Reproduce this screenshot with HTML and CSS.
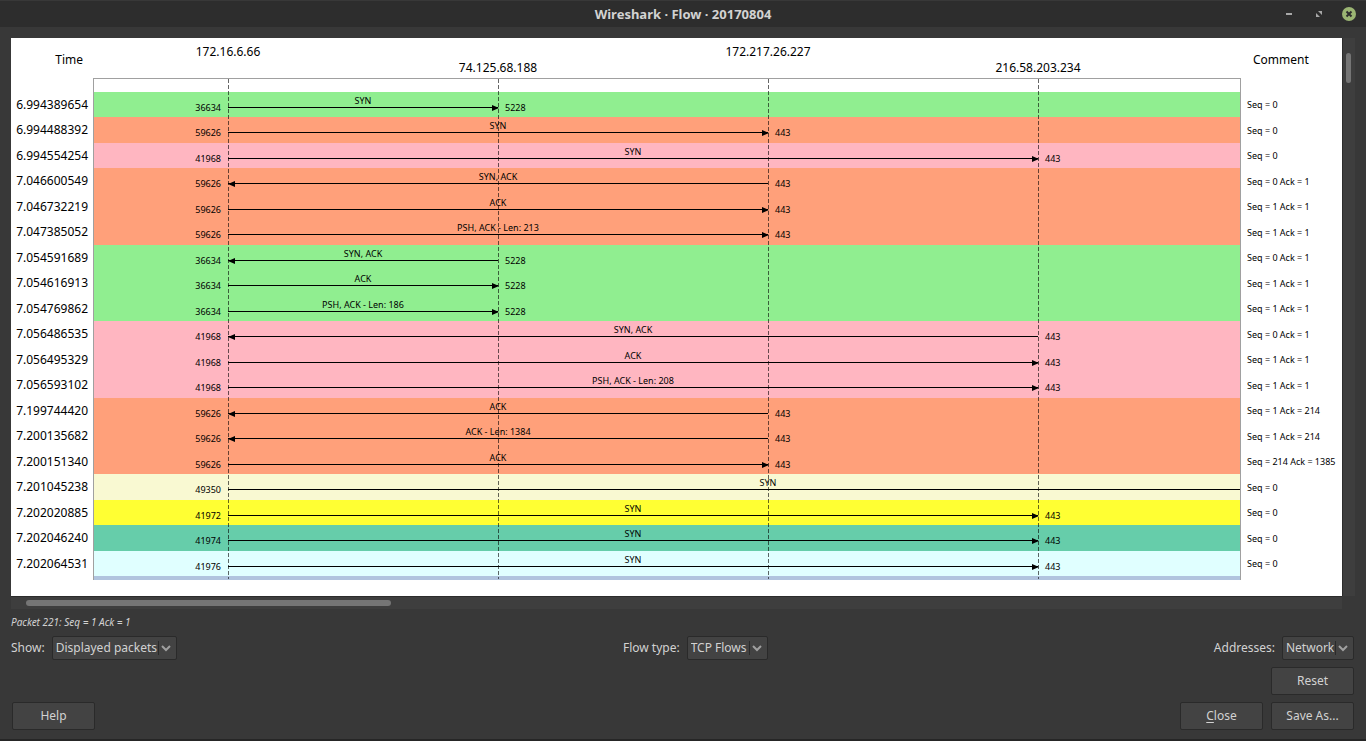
FILE: index.html
```html
<!DOCTYPE html>
<html lang="en">
<head>
<meta charset="utf-8">
<title>Wireshark · Flow · 20170804</title>
<link rel="stylesheet" href="styles.css">
</head>
<body>
<header class="titlebar">
  <h1>Wireshark · Flow · 20170804</h1>
  <div class="window-buttons">
    <button type="button" aria-label="Minimize"><svg width="14" height="14" viewBox="0 0 14 14"><path d="M4 6h6v2H4z" fill="#a8a8a8"/></svg></button>
    <button type="button" aria-label="Restore"><svg width="14" height="14" viewBox="0 0 14 14"><path d="M6 4h4v4zM4 6v4h4z" fill="#a8a8a8"/></svg></button>
    <button type="button" aria-label="Close window"><svg width="14" height="14" viewBox="0 0 14 14"><circle cx="7" cy="7" r="7" fill="#9bb573"/><path d="M4.500 4.500l5 5M9.500 4.500l-5 5" stroke="#2d2d2d" stroke-width="2"/></svg></button>
  </div>
</header>
<main class="dialog">
  <section class="viewport">
    <div class="canvas">
      <div class="flow-wrap">
        <table class="flow">
          <colgroup><col class="col-time"><col><col class="col-comment"></colgroup>
          <thead>
            <tr>
              <th class="time-head" scope="col">Time</th>
              <th class="hosts-head" scope="col">
                <div class="lanes hosts">
                  <span class="host host-1">172.16.6.66</span>
                  <span class="host host-2 low">74.125.68.188</span>
                  <span class="host host-3">172.217.26.227</span>
                  <span class="host host-4 low">216.58.203.234</span>
                </div>
                <div class="chart-top"></div>
              </th>
              <th class="comment-head" scope="col">Comment</th>
            </tr>
          </thead>
          <tbody>
            <tr class="green"><th scope="row">6.994389654</th><td class="chart"><div class="lanes"><span class="port">36634</span><span class="arrow right to-1">SYN</span><span class="peer">5228</span></div></td><td class="comment">Seq = 0</td></tr>
            <tr class="salmon"><th scope="row">6.994488392</th><td class="chart"><div class="lanes"><span class="port">59626</span><span class="arrow right to-2">SYN</span><span class="peer">443</span></div></td><td class="comment">Seq = 0</td></tr>
            <tr class="pink"><th scope="row">6.994554254</th><td class="chart"><div class="lanes"><span class="port">41968</span><span class="arrow right to-3">SYN</span><span class="peer">443</span></div></td><td class="comment">Seq = 0</td></tr>
            <tr class="salmon"><th scope="row">7.046600549</th><td class="chart"><div class="lanes"><span class="port">59626</span><span class="arrow left to-2">SYN, ACK</span><span class="peer">443</span></div></td><td class="comment">Seq = 0 Ack = 1</td></tr>
            <tr class="salmon"><th scope="row">7.046732219</th><td class="chart"><div class="lanes"><span class="port">59626</span><span class="arrow right to-2">ACK</span><span class="peer">443</span></div></td><td class="comment">Seq = 1 Ack = 1</td></tr>
            <tr class="salmon"><th scope="row">7.047385052</th><td class="chart"><div class="lanes"><span class="port">59626</span><span class="arrow right to-2">PSH, ACK - Len: 213</span><span class="peer">443</span></div></td><td class="comment">Seq = 1 Ack = 1</td></tr>
            <tr class="green"><th scope="row">7.054591689</th><td class="chart"><div class="lanes"><span class="port">36634</span><span class="arrow left to-1">SYN, ACK</span><span class="peer">5228</span></div></td><td class="comment">Seq = 0 Ack = 1</td></tr>
            <tr class="green"><th scope="row">7.054616913</th><td class="chart"><div class="lanes"><span class="port">36634</span><span class="arrow right to-1">ACK</span><span class="peer">5228</span></div></td><td class="comment">Seq = 1 Ack = 1</td></tr>
            <tr class="green"><th scope="row">7.054769862</th><td class="chart"><div class="lanes"><span class="port">36634</span><span class="arrow right to-1">PSH, ACK - Len: 186</span><span class="peer">5228</span></div></td><td class="comment">Seq = 1 Ack = 1</td></tr>
            <tr class="pink"><th scope="row">7.056486535</th><td class="chart"><div class="lanes"><span class="port">41968</span><span class="arrow left to-3">SYN, ACK</span><span class="peer">443</span></div></td><td class="comment">Seq = 0 Ack = 1</td></tr>
            <tr class="pink"><th scope="row">7.056495329</th><td class="chart"><div class="lanes"><span class="port">41968</span><span class="arrow right to-3">ACK</span><span class="peer">443</span></div></td><td class="comment">Seq = 1 Ack = 1</td></tr>
            <tr class="pink"><th scope="row">7.056593102</th><td class="chart"><div class="lanes"><span class="port">41968</span><span class="arrow right to-3">PSH, ACK - Len: 208</span><span class="peer">443</span></div></td><td class="comment">Seq = 1 Ack = 1</td></tr>
            <tr class="salmon"><th scope="row">7.199744420</th><td class="chart"><div class="lanes"><span class="port">59626</span><span class="arrow left to-2">ACK</span><span class="peer">443</span></div></td><td class="comment">Seq = 1 Ack = 214</td></tr>
            <tr class="salmon"><th scope="row">7.200135682</th><td class="chart"><div class="lanes"><span class="port">59626</span><span class="arrow left to-2">ACK - Len: 1384</span><span class="peer">443</span></div></td><td class="comment">Seq = 1 Ack = 214</td></tr>
            <tr class="salmon"><th scope="row">7.200151340</th><td class="chart"><div class="lanes"><span class="port">59626</span><span class="arrow right to-2">ACK</span><span class="peer">443</span></div></td><td class="comment">Seq = 214 Ack = 1385</td></tr>
            <tr class="cream"><th scope="row">7.201045238</th><td class="chart"><div class="lanes"><span class="port">49350</span><span class="arrow beyond">SYN</span></div></td><td class="comment">Seq = 0</td></tr>
            <tr class="yellow"><th scope="row">7.202020885</th><td class="chart"><div class="lanes"><span class="port">41972</span><span class="arrow right to-3">SYN</span><span class="peer">443</span></div></td><td class="comment">Seq = 0</td></tr>
            <tr class="teal"><th scope="row">7.202046240</th><td class="chart"><div class="lanes"><span class="port">41974</span><span class="arrow right to-3">SYN</span><span class="peer">443</span></div></td><td class="comment">Seq = 0</td></tr>
            <tr class="cyan"><th scope="row">7.202064531</th><td class="chart"><div class="lanes"><span class="port">41976</span><span class="arrow right to-3">SYN</span><span class="peer">443</span></div></td><td class="comment">Seq = 0</td></tr>
          </tbody>
          <tfoot><tr class="blue"><td></td><td class="chart"></td><td></td></tr></tfoot>
        </table>
        <div class="lanes lifelines" aria-hidden="true"><i></i><i></i><i></i><i></i></div>
      </div>
    </div>
    <div class="scroll-v"><div class="thumb"></div></div>
    <div class="scroll-h"><div class="thumb"></div></div>
  </section>
  <p class="status">Packet 221: Seq = 1 Ack = 1</p>
  <div class="controls">
    <div class="field">
      <label for="show">Show:</label>
      <span class="combo show"><select id="show"><option>Displayed packets</option><option>All packets</option></select><svg width="10" height="7" viewBox="0 0 10 7"><path d="M1 1l4 4 4-4" fill="none" stroke="#a0a0a0" stroke-width="2"/></svg></span>
    </div>
    <div class="field">
      <label for="type">Flow type:</label>
      <span class="combo type"><select id="type"><option>TCP Flows</option><option>All Flows</option></select><svg width="10" height="7" viewBox="0 0 10 7"><path d="M1 1l4 4 4-4" fill="none" stroke="#a0a0a0" stroke-width="2"/></svg></span>
    </div>
    <div class="field">
      <label for="addr">Addresses:</label>
      <span class="combo addr"><select id="addr"><option>Network</option><option>Any</option></select><svg width="10" height="7" viewBox="0 0 10 7"><path d="M1 1l4 4 4-4" fill="none" stroke="#a0a0a0" stroke-width="2"/></svg></span>
    </div>
  </div>
  <div class="actions reset"><button type="button" class="btn">Reset</button></div>
  <div class="actions">
    <button type="button" class="btn help">Help</button>
    <button type="button" class="btn"><u>C</u>lose</button>
    <button type="button" class="btn">Save As...</button>
  </div>
</main>
</body>
</html>
```
FILE: styles.css
```css
* { box-sizing: border-box; }
body {
  margin: 0;
  min-height: 100vh;
  display: flex;
  flex-direction: column;
  background: #383838;
  color: #d2d2d2;
  font: 12px/16px "Noto Sans", "Open Sans", sans-serif;
  border-bottom: 2px solid #262626;
}
.titlebar {
  display: grid;
  grid-template-columns: 1fr auto 1fr;
  align-items: center;
  height: 27px;
  padding: 0 10px;
  background: #2d2d2d;
  border-top: 1px solid #383838;
}
.titlebar h1 {
  grid-column: 2;
  margin: 0;
  font-size: 13px;
  line-height: 16px;
  font-weight: 700;
  color: #d2d2d2;
}
.window-buttons { display: flex; justify-content: flex-end; gap: 16px; }
.window-buttons button { padding: 0; border: 0; background: none; display: flex; }

.dialog {
  flex: 1;
  display: flex;
  flex-direction: column;
  padding: 11px 11px 9px;
}
.viewport {
  flex: 1;
  display: grid;
  grid-template-columns: minmax(0, 1fr) 13px;
  grid-template-rows: 1fr 13px;
}
.canvas {
  background: #fff;
  color: #000;
  padding-bottom: 16px;
  overflow: hidden;
}
.scroll-v, .scroll-h { background: #3e3e3e; }
.scroll-v { padding: 15px 4px 0 3px; border-left: 1px solid #2c2c2c; }
.scroll-v .thumb { height: 30px; border-radius: 3px; background: #757575; }
.scroll-h { padding: 3px 0 0 15px; border-top: 1px solid #2c2c2c; }
.scroll-h .thumb { width: 365px; max-width: 90%; height: 6px; border-radius: 3px; background: #757575; }

.flow-wrap { position: relative; }
.flow {
  width: 100%;
  table-layout: fixed;
  border-spacing: 0;
}
.col-time { width: 82px; }
.col-comment { width: 101px; }
.flow th, .flow td { padding: 0; font-weight: 400; white-space: nowrap; }
.flow thead th { vertical-align: top; }
.flow thead .time-head { padding: 14px 10px 0 0; text-align: right; }
.flow thead .comment-head { padding: 14px 0 0 12px; text-align: left; }
.lanes {
  display: grid;
  grid-template-columns: 134fr 270fr 270fr 270fr 202fr;
  align-items: start;
}
.hosts { height: 40px; padding: 6px 1px 0; }
.host { grid-row: 1; display: flex; justify-content: center; width: 0; }
.host-1 { grid-column: 2; }
.host-2 { grid-column: 3; }
.host-3 { grid-column: 4; }
.host-4 { grid-column: 5; }
.low { padding-top: 16px; }
.chart-top { height: 14px; border: 1px solid #a0a0a0; border-bottom: 0; }

.flow tbody tr { height: 26px; }
.flow tbody tr:nth-child(odd) { height: 25px; }
.flow tbody th { padding-right: 5px; text-align: right; }
.flow .chart {
  vertical-align: top;
  border: solid #a0a0a0;
  border-width: 0 1px;
  font-size: 9px;
  line-height: 13px;
}
.chart .lanes { height: 25px; overflow: hidden; }
.flow .comment { padding-left: 6px; font-size: 9px; line-height: 13px; }
.flow tfoot tr { height: 4px; }
.port { padding: 9px 7px 0 0; text-align: right; }
.peer { padding: 9px 0 0 7px; }
.arrow {
  position: relative;
  height: 16px;
  padding-top: 2px;
  border-bottom: 1px solid #000;
  text-align: center;
}
.to-1 { grid-column: 2 / 3; }
.to-2 { grid-column: 2 / 4; }
.to-3 { grid-column: 2 / 5; }
/* The target host is past the right edge, four lanes from the source. */
.beyond { grid-column: 2 / 6; width: calc(100% * 1080 / 1012); }
.arrow::after {
  position: absolute;
  bottom: -4px;
  border: solid transparent;
  border-width: 3px 0;
}
.right::after { content: ""; right: -1px; border-left: 7px solid #000; }
.left::after { content: ""; left: 0; border-right: 7px solid #000; }

.green .chart { background: #90ee90; }
.salmon .chart { background: #ffa07a; }
.pink .chart { background: #ffb6c1; }
.cream .chart { background: #f9f9d2; }
.yellow .chart { background: #ffff33; }
.teal .chart { background: #66cdaa; }
.cyan .chart { background: #e0ffff; }
.blue .chart { background: #b0c4de; }

.lifelines {
  position: absolute;
  inset: 41px 102px 1px 83px;
  align-items: stretch;
  pointer-events: none;
}
.lifelines i {
  width: 1px;
  background: repeating-linear-gradient(rgba(0, 0, 0, .6) 0 4px, transparent 4px 6px);
}
.lifelines i:first-child { grid-column-start: 2; }

.status { margin: 6px 0; font-size: 10px; line-height: 15px; font-style: italic; }
.controls { display: flex; justify-content: space-between; padding-right: 1px; }
.field { display: flex; align-items: center; gap: 7px; }
.combo { position: relative; display: flex; }
.combo select {
  appearance: none;
  width: 100%;
  height: 24px;
  padding: 0 0 0 3px;
  border: 1px solid #2a2a2a;
  border-radius: 2px;
  background: #434343;
  color: #d2d2d2;
  font: inherit;
}
.combo::after {
  content: "";
  position: absolute;
  top: 5px;
  right: 18px;
  height: 14px;
  border-left: 1px solid #2a2a2a;
}
.combo svg { position: absolute; right: 6px; top: 9px; pointer-events: none; }
.show { width: 125px; }
.type { width: 81px; }
.addr { width: 72px; }
.actions { display: flex; justify-content: flex-end; gap: 8px; padding: 7px 1px 0; }
.btn {
  width: 83px;
  height: 28px;
  padding: 0;
  border: 1px solid #2a2a2a;
  border-radius: 2px;
  background: #434343;
  color: #d2d2d2;
  font: inherit;
}
.btn u { text-underline-offset: 2px; }
.help { margin-right: auto; }
```
